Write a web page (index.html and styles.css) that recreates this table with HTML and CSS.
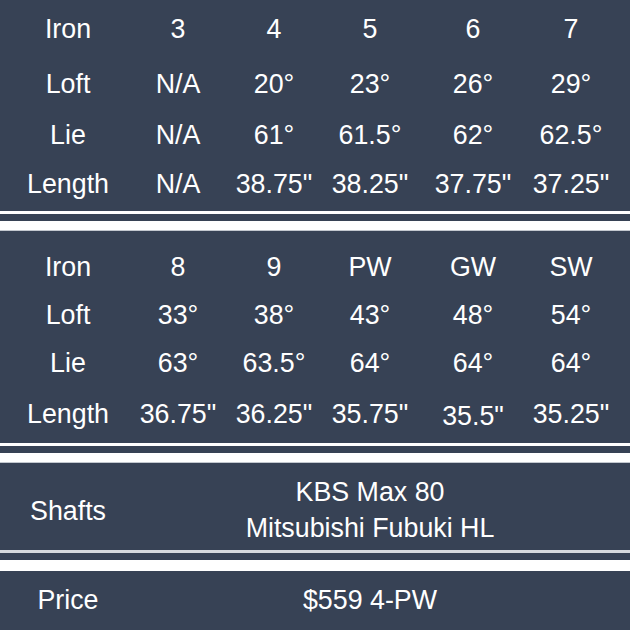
FILE: index.html
```html
<!DOCTYPE html>
<html lang="en">
<head>
<meta charset="utf-8">
<title>Iron Specs</title>
<link rel="stylesheet" href="styles.css">
</head>
<body>
<main class="sheet">
  <section class="specs specs-top">
    <div class="cell label">Iron</div><div class="cell">3</div><div class="cell">4</div><div class="cell">5</div><div class="cell">6</div><div class="cell">7</div>
    <div class="cell label">Loft</div><div class="cell">N/A</div><div class="cell">20°</div><div class="cell">23°</div><div class="cell">26°</div><div class="cell">29°</div>
    <div class="cell label">Lie</div><div class="cell">N/A</div><div class="cell">61°</div><div class="cell">61.5°</div><div class="cell">62°</div><div class="cell">62.5°</div>
    <div class="cell label">Length</div><div class="cell">N/A</div><div class="cell">38.75"</div><div class="cell">38.25"</div><div class="cell">37.75"</div><div class="cell">37.25"</div>
  </section>
  <div class="divider"><div class="thin"></div><div class="thick"></div></div>
  <section class="specs specs-bottom">
    <div class="cell label">Iron</div><div class="cell">8</div><div class="cell">9</div><div class="cell">PW</div><div class="cell">GW</div><div class="cell">SW</div>
    <div class="cell label">Loft</div><div class="cell">33°</div><div class="cell">38°</div><div class="cell">43°</div><div class="cell">48°</div><div class="cell">54°</div>
    <div class="cell label">Lie</div><div class="cell">63°</div><div class="cell">63.5°</div><div class="cell">64°</div><div class="cell">64°</div><div class="cell">64°</div>
    <div class="cell label">Length</div><div class="cell">36.75"</div><div class="cell">36.25"</div><div class="cell">35.75"</div><div class="cell low">35.5"</div><div class="cell">35.25"</div>
  </section>
  <div class="divider"><div class="thin"></div><div class="thick"></div></div>
  <section class="info shafts">
    <div class="cell label">Shafts</div>
    <div class="cell value">KBS Max 80<br>Mitsubishi Fubuki HL</div>
  </section>
  <div class="divider divider-last"><div class="thin"></div><div class="thick"></div></div>
  <section class="info price">
    <div class="cell label">Price</div>
    <div class="cell value">$559 4-PW</div>
  </section>
</main>
</body>
</html>
```
FILE: styles.css
```css
* { box-sizing: border-box; }
html, body { margin: 0; padding: 0; }
body {
  background: #374255;
  color: #ffffff;
  font-family: "Liberation Sans", Arial, sans-serif;
  font-size: 26.8px;
}
.sheet {
  width: 630px;
  height: 630px;
  overflow: hidden;
  background: #374255;
  display: flex;
  flex-direction: column;
}
.specs {
  display: grid;
  grid-template-columns: 136px 84px 108px 84px 122px 74px;
  justify-items: center;
  align-items: center;
  white-space: nowrap;
}
.specs-top {
  grid-template-rows: 58px 52px 50px 48px;
  margin-bottom: 3px;
}
.specs-bottom {
  grid-template-rows: 48px 48px 48px 54px;
  padding-top: 12px;
  margin-bottom: 2px;
}
.cell { line-height: 30px; }
.low { padding-top: 3px; }
.divider {
  display: flex;
  flex-direction: column;
  gap: 7px;
}
.thin { height: 3px; background: #ffffff; }
.thick {
  height: 10px;
  background: #ffffff;
  border-bottom: 1px solid #c3c8cf;
}
.divider-last .thin { background: #d6d9de; }
.divider-last .thick { height: 11px; border-bottom: none; }
.info {
  display: grid;
  grid-template-columns: 136px 468px;
  justify-items: center;
  align-items: center;
  white-space: nowrap;
}
.shafts {
  height: 87px;
  padding-top: 11px;
  padding-bottom: 4px;
}
.shafts .value { line-height: 36px; text-align: center; }
.shafts .label { margin-top: 1px; }
.price { height: 60px; }
.price .cell { margin-top: -2px; }
```
